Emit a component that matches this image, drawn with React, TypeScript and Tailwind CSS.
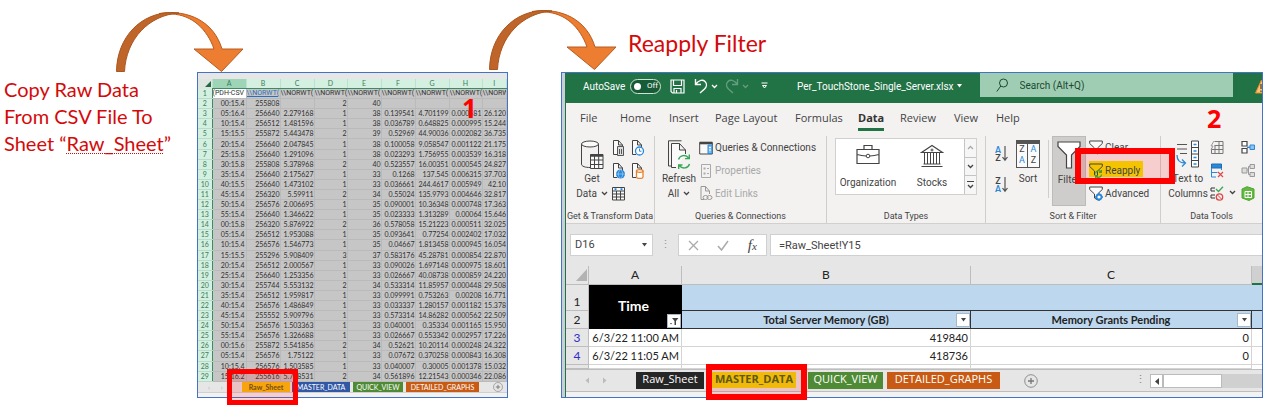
import React from "react";

const RAW_COLUMNS = ["A", "B", "C", "D", "E", "F", "G", "H", "I"];
const RAW_ROWS = [
  "00:15.4|255808||2|40||||",
  "05:16.4|256640|2.279168|1|38|0.139541|4.701199|0.000581|26.120",
  "10:15.4|256512|1.481596|1|38|0.036789|0.648825|0.000995|15.244",
  "15:15.5|255872|5.443478|2|39|0.52969|44.90036|0.002082|36.735",
  "20:15.4|256640|2.047845|1|38|0.100058|9.058547|0.001122|21.175",
  "25:15.8|256640|1.291096|1|38|0.023293|1.756955|0.003539|16.318",
  "30:15.8|255808|5.378968|2|40|0.523557|16.00351|0.000545|24.827",
  "35:15.4|256640|2.175627|1|33|0.1268|137.545|0.006315|37.703",
  "40:15.5|256640|1.473102|1|33|0.036661|244.4617|0.005949|42.10",
  "45:15.4|256320|5.59911|2|34|0.55024|135.9793|0.004646|32.817",
  "50:15.4|256576|2.006695|1|35|0.090001|10.36348|0.000748|17.363",
  "55:15.4|256640|1.346622|1|35|0.023333|1.313289|0.00064|15.646",
  "00:15.8|256320|5.876922|2|36|0.578058|15.21223|0.000511|32.025",
  "05:15.4|256512|1.953088|1|35|0.093641|0.77254|0.002402|17.032",
  "10:15.4|256576|1.546773|1|35|0.04667|1.813458|0.000945|16.054",
  "15:15.5|255296|5.908409|3|37|0.583176|45.28781|0.000854|22.870",
  "20:15.4|256512|2.000567|1|33|0.090026|1.697148|0.000975|18.601",
  "25:15.4|256640|1.253356|1|33|0.026667|40.08738|0.000859|24.220",
  "30:15.4|255744|5.553132|2|34|0.533314|11.85957|0.000448|29.508",
  "35:15.4|256512|1.959817|1|33|0.099991|0.753263|0.00208|16.771",
  "40:15.4|256576|1.486849|1|33|0.033337|1.280157|0.001182|15.378",
  "45:15.4|255552|5.909796|1|33|0.573314|14.86282|0.000562|22.509",
  "50:15.4|256576|1.503363|1|33|0.040001|0.35334|0.001165|15.950",
  "55:15.4|256576|1.326688|1|33|0.026667|0.553342|0.002957|17.226",
  "00:15.6|255872|5.541856|2|34|0.52621|10.20114|0.000248|24.322",
  "05:15.4|256576|1.75122|1|33|0.07672|0.370258|0.000843|16.308",
  "10:15.4|256576|1.503585|1|33|0.040007|0.30005|0.001378|15.032",
  "15:16.2|255616|5.748531|2|34|0.561896|12.21543|0.000346|22.086",
].map((r) => r.split("|"));

const Arrow = ({ className }: { className: string }) => (
  <svg className={className} width="130" height="62" viewBox="0 0 130 62" aria-hidden="true">
    <path d="M44 2.5C74-2 99 11 107 38H128L106.500 60.500 79 38H99C92 18 77 4 57 3Z" fill="#ED7D31" stroke="#B85C20" strokeWidth="1" />
    <path d="M1.500 60.500C2 26 26 1.500 57 1.500L64 2C34 4 11 28 9.500 60.500Z" fill="#C0652A" stroke="#A9561F" strokeWidth="1" />
  </svg>
);

const Chevron = ({ className = "" }: { className?: string }) => (
  <svg className={`shrink-0 ${className}`} width="7" height="5" viewBox="0 0 7 5" fill="none" stroke="currentColor" strokeWidth="1.300" aria-hidden="true">
    <path d="M1 1l2.500 2.500L6 1" />
  </svg>
);

const Caret = ({ className = "" }: { className?: string }) => (
  <svg className={`shrink-0 ${className}`} width="7" height="4" viewBox="0 0 7 4" fill="currentColor" aria-hidden="true">
    <path d="M1 0h5L3.500 3.500z" />
  </svg>
);

const PlusCircle = ({ className }: { className: string }) => (
  <svg className={className} viewBox="0 0 14 14" fill="none" stroke="#777" aria-hidden="true">
    <circle cx="7" cy="7" r="6.300" strokeWidth=".8" />
    <path d="M7 4v6M4 7h6" strokeWidth="1.300" />
  </svg>
);

const Svg = ({ w, h, children }: { w: number; h: number; children: React.ReactNode }) => (
  <svg width={w} height={h} viewBox={`0 0 ${w} ${h}`} fill="none" stroke="#444" strokeWidth="1" className="shrink-0" aria-hidden="true">
    {children}
  </svg>
);

const Page = () => <path d="M5 14.500H1.500V.5H6.500L10.500 5V8M6.500 .5V5H10.500" fill="#fafafa" />;

const FileTextIcon = () => (
  <Svg w={14} h={16}><Page /><path d="M5.500 6.500h6v9h-6zM7.500 9v5M9.500 9v5" fill="#ddd" stroke="#555" /></Svg>
);
const FileClockIcon = () => (
  <Svg w={14} h={16}><Page /><circle cx="8.500" cy="11" r="4" fill="#fff" stroke="#2B88D8" strokeWidth="1.300" /><path d="M8.500 8.500V11.200H10.500" stroke="#2B88D8" /></Svg>
);
const FileGlobeIcon = () => (
  <Svg w={14} h={16}><Page /><circle cx="8.500" cy="11" r="4.500" fill="#2B88D8" stroke="none" /><path d="M4 11h9M8.500 6.500c-3 3-3 6 0 9M8.500 6.500c3 3 3 6 0 9" stroke="#9cd0f5" strokeWidth=".7" /></Svg>
);
const FileDbIcon = () => (
  <Svg w={14} h={16}><Page /><path d="M5.500 8v6c0 2 6.500 2 6.500 0V8" fill="#fff" stroke="#E8802C" strokeWidth="1.300" /><ellipse cx="8.750" cy="8" rx="3.300" ry="1.300" fill="#fff" stroke="#E8802C" strokeWidth="1.300" /></Svg>
);
const TableIcon = () => (
  <Svg w={14} h={16}><path d="M.5 1.500h12v12.500H.5zM.5 5h12M.5 8h12M.5 11h12M4.500 5v9M8.500 5v9" fill="#fafafa" /><path d="M2.500 3.200h2M8.500 3.200h2" stroke="#2B88D8" strokeWidth="2" /></Svg>
);
const GetDataIcon = () => (
  <Svg w={24} h={30}>
    <path d="M1.500 4v20c0 2.500 4 3.500 8.500 3.500M18.500 4v10" />
    <ellipse cx="10" cy="4" rx="8.500" ry="3" fill="#fafafa" />
    <path d="M10.500 14.500h12.500v14H10.500z" fill="#fafafa" />
    <path d="M10.500 15.500h12.500" strokeWidth="2.500" />
    <path d="M10.500 20h12.500M10.500 24.500h12.500M14.500 15v13M18.700 15v13" />
  </Svg>
);
const RefreshIcon = () => (
  <Svg w={24} h={30}>
    <path d="M14.500 .8H1.500V26H5" />
    <path d="M9 27.500H4.500V3.500H12.500L18.500 10V14M12.500 3.500V10H18.500" fill="#fafafa" />
    <path d="M11.500 19.500A5.600 5.600 0 0 1 21.500 18M22.500 24A5.600 5.600 0 0 1 12.500 25.500M22.300 14.500V18.600H18M11.700 29V25H15.500" stroke="#3AA757" strokeWidth="1.400" />
  </Svg>
);
const QueriesIcon = () => (
  <Svg w={14} h={14}><path d="M.7 1.500h12.600v11.500H.7z" fill="#fafafa" /><path d="M.7 2h12.600" strokeWidth="2.600" /><path d="M9 4h4v8.500H9z" fill="#7DBDEC" stroke="#2B88D8" /><path d="M10 6.500h2M10 9h2" stroke="#fff" /></Svg>
);
const PropertiesIcon = () => (
  <Svg w={14} h={14}><g stroke="#aaa"><path d="M2.500 .5h9v13h-9z" /><path d="M4.500 4.500h2M4.500 9.500h2" strokeWidth="2" /><path d="M8 4.500h2M8 9.500h2" /></g></Svg>
);
const LinksIcon = () => (
  <Svg w={14} h={15}><g stroke="#999"><path d="M5 13.500H2V.5H6.500L10.500 5V8M6.500 .5V5H10.500" /><ellipse cx="6.500" cy="11.500" rx="2.500" ry="2" /><ellipse cx="10.500" cy="11.500" rx="2.500" ry="2" /></g></Svg>
);
const BriefcaseIcon = () => (
  <Svg w={24} h={21}><path d="M1 5.500h22V19.500H1zM8 5.500V1.500h8v4M1 10.500c4 1 6 1.300 9 1.500M23 10.500c-4 1-6 1.300-9 1.500" strokeWidth="1.200" /><circle cx="12" cy="12" r="1.800" /></Svg>
);
const BankIcon = () => (
  <Svg w={24} h={24}><path d="M1.500 8.500L12 1.500 22.500 8.500zM3.500 20h17M1.500 22.500h21" strokeWidth="1.200" /><circle cx="12" cy="6" r="1" /><path d="M4.500 9v11M7.500 9v11M10.500 9v11M13.500 9v11M16.500 9v11M19.500 9v11" /></Svg>
);
const SortIcon = ({ top, bottom, topColor, bottomColor }: { top: string; bottom: string; topColor: string; bottomColor: string }) => (
  <span className="flex items-center">
    <span className="flex flex-col text-[9px] font-semibold leading-2">
      <span className={topColor}>{top}</span>
      <span className={bottomColor}>{bottom}</span>
    </span>
    <Svg w={8} h={17}><path d="M4 1v14M1.500 12L4 15.200 6.500 12" stroke="#555" strokeWidth="1.200" /></Svg>
  </span>
);
const Funnel = ({ extra }: { extra?: React.ReactNode }) => (
  <Svg w={14} h={15}><path d="M.7 1h12.600v2.500L8.500 8v6L5.500 12V8L.7 3.500z" fill="#fafafa" />{extra}</Svg>
);

const FILE_TABS = [
  ["File", "w-10"],
  ["Home", "w-[49px]"],
  ["Insert", "w-[46px]"],
  ["Page Layout", "w-[80px]"],
  ["Formulas", "w-[63px]"],
  ["Data", "w-[42px]"],
  ["Review", "w-[54px]"],
  ["View", "w-[42px]"],
  ["Help", "w-[36px]"],
];

const Group = ({ label, className, children }: { label: string; className: string; children: React.ReactNode }) => (
  <section aria-label={label} className={`flex shrink-0 flex-col ${className}`}>
    <div className="flex h-[70px] shrink-0">{children}</div>
    <h3 className="mt-1 whitespace-nowrap text-center text-[9px] leading-[13px] text-[#444]">{label}</h3>
  </section>
);

const BigButton = ({ icon, lines, chevron, className }: { icon: React.ReactNode; lines: string[]; chevron?: boolean; className: string }) => (
  <button className={`flex h-[70px] shrink-0 flex-col items-center whitespace-nowrap pt-1 text-[10px] leading-[15px] text-[#444] ${className}`}>
    <span className="flex h-[31px] items-start">{icon}</span>
    {lines.map((l, i) => (
      <span key={l} className="flex items-center gap-1">
        {l}
        {chevron && i === lines.length - 1 && <Chevron />}
      </span>
    ))}
  </button>
);

const RowButton = ({ icon, label, disabled }: { icon: React.ReactNode; label: string; disabled?: boolean }) => (
  <button disabled={disabled} className={`flex h-[23px] items-center gap-0.5 whitespace-nowrap text-[10px] ${disabled ? "text-[#a8a8a8]" : "text-[#444]"}`}>
    {icon}
    {label}
  </button>
);

const IconButton = ({ label, children }: { label: string; children: React.ReactNode }) => (
  <button aria-label={label} className="flex h-[23px] items-center">{children}</button>
);

function RawWorkbook() {
  return (
    <section aria-label="Raw sheet" className="relative mt-[72px] flex w-[311px] shrink-0 flex-col self-start border border-[#4472c4] bg-[#e6e6e6] font-[Lato,sans-serif]">
      <div className="h-1.5" />
      <table className="h-[303px] w-full table-fixed border-collapse text-[7px] leading-[9px] text-[#303030]">
        <colgroup>
          <col className="w-[14px]" />
          {["w-[34px]", "w-[34px]", "w-[34px]", "w-[33px]", "w-[34px]", "w-[34px]", "w-[34px]", "w-[33px]"].map((w, i) => (
            <col key={i} className={w} />
          ))}
          <col />
        </colgroup>
        <thead>
          <tr className="bg-[#d3f0e0] text-[#3d7d5c]">
            <th className="bg-[#dfe6e2] p-0">
              <svg width="8" height="8" viewBox="0 0 8 8" className="ml-auto block" aria-hidden="true"><path d="M7 1v6H1z" fill="#1e6b43" /></svg>
            </th>
            {RAW_COLUMNS.map((c) => (
              <th key={c} className={`border-x border-b border-x-[#bfe0cf] border-b-[#3d8b63] p-0 font-normal ${c === "A" ? "bg-[#9fd5b7]" : ""}`}>{c}</th>
            ))}
          </tr>
        </thead>
        <tbody className="bg-[#c6c6c6]">
          <tr>
            <th className="border-b border-r border-b-[#b9dcca] border-r-[#3d8b63] bg-[#d3f0e0] p-0 font-normal text-[#3d7d5c]">1</th>
            {RAW_COLUMNS.map((c) => (
              <td key={c} className={`overflow-hidden whitespace-nowrap border border-[#bababa] p-0 font-[Roboto,sans-serif] ${c === "A" ? "bg-white" : ""} ${c === "B" ? "text-[#2f6db5] underline" : ""}`}>
                {c === "A" ? "(PDH-CSV" : c === "I" ? "\\\\NORW" : "\\\\NORWT("}
              </td>
            ))}
          </tr>
          {RAW_ROWS.map((row, i) => (
            <tr key={i}>
              <th className="border-b border-r border-b-[#b9dcca] border-r-[#3d8b63] bg-[#d3f0e0] p-0 font-normal text-[#3d7d5c]">{i + 2}</th>
              {row.map((v, j) => (
                <td key={j} className={`overflow-hidden border border-[#bababa] p-0 text-right ${j === 0 ? "pr-px" : ""}`}>{v}</td>
              ))}
            </tr>
          ))}
        </tbody>
      </table>
      <div className="flex h-[10px] pl-[10px] text-[7px] leading-[10px] text-white">
        <span className="w-[34px] text-[#b0b0b0]">‹&nbsp;&nbsp;&nbsp;&nbsp;&nbsp;&nbsp;›</span>
        <button className="relative w-12 bg-[#f5c211] font-bold text-[#5c5a10]">
          Raw_Sheet
          <span className="absolute -left-[15px] -top-[13px] h-9 w-[71px] border-[5px] border-[#fe0000] bg-[#ff0000]/15" />
        </button>
        <button className="ml-0.5 w-[58px] bg-[#3158a6]">MASTER_DATA</button>
        <button className="ml-[3px] w-[50px] bg-[#4f8a35]">QUICK_VIEW</button>
        <button className="ml-[3px] w-[73px] bg-[#c85a14]">DETAILED_GRAPHS</button>
        <button aria-label="Add sheet" className="ml-[14px]"><PlusCircle className="size-[10px]" /></button>
      </div>
      <div className="h-[5px] border-t border-[#d0d0d0] bg-[#f2f2f2]" />
      <span className="absolute left-[264px] top-[18px] font-['Open_Sans',sans-serif] text-[26px] font-bold leading-[34px] text-[#fe0000]">1</span>
    </section>
  );
}

function TitleBar() {
  return (
    <header className="flex h-[30px] items-center bg-[#217346] pb-1 pl-[17px] text-[10px] text-white">
      <span className="w-[47px]">AutoSave</span>
      <button role="switch" aria-checked="false" aria-label="AutoSave" className="flex h-[15px] w-[31px] items-center gap-1.5 rounded-full border border-[#cfe3d7] bg-[#185c37] px-0.5 text-[8px]">
        <span className="ml-px size-[7px] rounded-full bg-white" />
        Off
      </button>
      <button aria-label="Save" className="ml-[9px]">
        <svg width="15" height="15" viewBox="0 0 15 15" fill="none" stroke="#fff" strokeWidth="1.200" aria-hidden="true"><path d="M1 1h13v13H2.500L1 12.500zM3.500 1v5.500h8V1M4 14v-4.500h7V14M6.500 11v3" /></svg>
      </button>
      <button aria-label="Undo" className="ml-[9px]">
        <svg width="14" height="16" viewBox="0 0 14 16" fill="none" stroke="#fff" strokeWidth="1.400" aria-hidden="true"><path d="M1.500 1v5.500H7M1.500 6.500C5 1.500 9 1.500 11 3.500C13.500 6 12.500 9 10.500 11L6 15" /></svg>
      </button>
      <Chevron className="ml-[3px]" />
      <button aria-label="Redo" className="ml-[7px] opacity-30">
        <svg width="14" height="16" viewBox="0 0 14 16" fill="none" stroke="#fff" strokeWidth="1.400" aria-hidden="true"><path d="M12.500 1v5.500H7M12.500 6.500C9 1.500 5 1.500 3 3.500C.5 6 1.500 9 3.500 11L8 15" /></svg>
      </button>
      <Chevron className="ml-[3px] opacity-30" />
      <button aria-label="Customize" className="ml-[12px]">
        <svg width="7" height="8" viewBox="0 0 7 8" fill="none" stroke="#fff" aria-hidden="true"><path d="M.5 1h6M1.500 3.500h4L3.500 6z" /></svg>
      </button>
      <h2 className="ml-[29px] shrink-0 whitespace-nowrap">Per_TouchStone_Single_Server.xlsx</h2>
      <Caret className="ml-0.5" />
      <label className="ml-[17px] mr-[22px] flex h-6 flex-1 items-center self-start bg-[#9fcdb3] pl-4 text-[#1c4a30]">
        <svg width="13" height="15" viewBox="0 0 13 15" fill="none" stroke="currentColor" aria-hidden="true"><circle cx="7.500" cy="5" r="4" /><path d="M4.800 8L.8 13.500" /></svg>
        <input aria-label="Search" placeholder="Search (Alt+Q)" className="ml-[11px] w-40 bg-transparent outline-none placeholder:text-[#1c4a30]" />
      </label>
      <svg width="7" height="15" viewBox="0 0 7 15" className="shrink-0" aria-hidden="true"><path d="M6.500 1L12 14H.5z" fill="#fbc27a" stroke="#e88b24" /><path d="M6 5v5M6 11.500V13" stroke="#222" /></svg>
    </header>
  );
}

function Ribbon() {
  return (
    <div className="bg-[#f3f2f1] text-[#444]">
      <nav className="flex h-[33px] items-start pl-[14px] font-['Open_Sans',sans-serif] text-[11px]">
        {FILE_TABS.map(([name, w]) => (
          <button key={name} className={`flex shrink-0 whitespace-nowrap ${w}`}>
            <span className={`pt-1.5 leading-[17px] ${name === "Data" ? "border-b-[3px] border-[#217346] pb-0.5 font-bold text-[#333]" : ""}`}>{name}</span>
          </button>
        ))}
      </nav>
      <div className="flex h-[88px] divide-x divide-[#cfcecd] border-b border-[#d2d0ce]">
        <Group label="Get & Transform Data" className="w-[89px]">
          <BigButton icon={<GetDataIcon />} lines={["Get", "Data"]} chevron className="ml-2 w-9" />
          <div className="grid grid-cols-[19px_19px] content-start pl-[2px]">
            <IconButton label="From text"><FileTextIcon /></IconButton>
            <IconButton label="Recent sources"><FileClockIcon /></IconButton>
            <IconButton label="From web"><FileGlobeIcon /></IconButton>
            <IconButton label="Existing connections"><FileDbIcon /></IconButton>
            <IconButton label="From table"><TableIcon /></IconButton>
          </div>
        </Group>
        <Group label="Queries & Connections" className="w-[172px]">
          <BigButton icon={<RefreshIcon />} lines={["Refresh", "All"]} chevron className="ml-1 w-10" />
          <div className="flex flex-col">
            <RowButton icon={<QueriesIcon />} label="Queries & Connections" />
            <RowButton icon={<PropertiesIcon />} label="Properties" disabled />
            <RowButton icon={<LinksIcon />} label="Edit Links" disabled />
          </div>
        </Group>
        <Group label="Data Types" className="w-[159px]">
          <div className="ml-2 mt-0.5 flex h-[57px] w-[142px] border border-[#d2d0ce] bg-white text-[10px] leading-[14px]">
            <button className="flex w-16 flex-col items-center justify-end pb-1"><span className="flex h-8 items-start"><BriefcaseIcon /></span>Organization</button>
            <button className="flex w-16 flex-col items-center justify-end pb-1"><span className="flex h-8 items-start"><BankIcon /></span>Stocks</button>
            <div className="ml-auto flex w-3 flex-col divide-y divide-[#c4c4c4] border-l border-[#c4c4c4] bg-[#f6f6f6]">
              <button aria-label="Previous" className="flex flex-1 items-center justify-center text-[#aaa]"><Chevron className="rotate-180" /></button>
              <button aria-label="Next" className="flex flex-1 items-center justify-center"><Chevron /></button>
              <button aria-label="More" className="flex flex-1 flex-col items-center justify-center gap-0.5"><span className="h-px w-[7px] bg-[#444]" /><Chevron /></button>
            </div>
          </div>
        </Group>
        <Group label="Sort & Filter" className="w-[175px]">
          <div className="ml-[9px] flex w-[17px] flex-col gap-[14px] pt-[9px]">
            <button aria-label="Sort A to Z"><SortIcon top="A" bottom="Z" topColor="text-[#2b88d8]" bottomColor="text-[#444]" /></button>
            <button aria-label="Sort Z to A"><SortIcon top="Z" bottom="A" topColor="text-[#444]" bottomColor="text-[#2b88d8]" /></button>
          </div>
          <BigButton
            icon={
              <span className="grid h-7 w-6 grid-cols-2 border border-t-4 border-[#555] bg-[#fafafa] text-center text-[9px] leading-[11px]">
                <span className="border-r border-[#555]">Z<br /><span className="text-[#2b88d8]">A</span></span>
                <span><span className="text-[#2b88d8]">A</span><br />Z</span>
              </span>
            }
            lines={["Sort"]}
            className="ml-1 w-6"
          />
          <div className="ml-2 mt-1 h-[58px] w-px bg-[#cfcecd]" />
          <BigButton
            icon={<Svg w={24} h={28}><path d="M1 1h22v4.500L14.500 14v13H9.500V14L1 5.500z" fill="#fff" strokeWidth="1.200" /></Svg>}
            lines={["Filter"]}
            className="ml-[3px] w-[34px] border border-[#bdbbb9] bg-[#cfcdcb]"
          />
          <div className="flex flex-col pl-[3px]">
            <RowButton icon={<Funnel extra={<path d="M9 9l4 4M13 9l-4 4" stroke="#d33" />} />} label="Clear" />
            <div className="relative flex h-[23px]">
              <span className="absolute -left-[14px] -top-[11px] h-9 w-[100px] bg-[#ff0000]/15" />
              <span className="absolute left-0 top-0.5 h-4 w-[54px] bg-[#f5c400]" />
              <span className="relative flex">
                <RowButton
                  icon={<Svg w={14} h={15}><path d="M.7 1h12.600v2.500L8.500 8v5L5.500 12V8L.7 3.500z" /><path d="M6.500 10.500a3 3 0 0 1 5.500-1.500M12.500 11.500a3 3 0 0 1-5.500 1.500M12.300 7v2.300H10M6.700 15v-2.300H9" stroke="#4a9a2a" strokeWidth="1.300" /></Svg>}
                  label="Reapply"
                />
              </span>
              <span className="absolute -left-[14px] -top-[11px] h-9 w-[100px] border-[6px] border-[#fe0000]" />
            </div>
            <RowButton icon={<Funnel extra={<><circle cx="10" cy="11" r="2.500" fill="#fff" stroke="#2B88D8" strokeWidth="1.800" /><path d="M10 7v1.500M10 13.500V15M6 11h1.500M12.500 11H14" stroke="#2B88D8" strokeWidth="1.500" /></>} />} label="Advanced" />
          </div>
        </Group>
        <section aria-label="Data Tools" className="relative min-w-0 flex-1">
          <div className="flex h-[70px]">
            <BigButton
              icon={
                <Svg w={24} h={28}>
                  <path d="M1 4.500h10M1 9h10M4 13.500h7" stroke="#555" />
                  <path d="M15.500 1h7v26h-7zM15.500 7.500h7M15.500 14h7M15.500 20.500h7" fill="#fff" />
                  <path d="M17.500 4.500h3M17.500 11h3M17.500 17.500h3M17.500 24h3M1 15c0 6 3 8 8 8M6 19.500L9.500 23 6 26.500" stroke="#2B88D8" strokeWidth="1.300" />
                </Svg>
              }
              lines={["Text to", "Columns"]}
              className="ml-[7px] w-10"
            />
            <div className="ml-0.5 flex w-[19px] flex-col">
              <IconButton label="Flash fill"><Svg w={14} h={15}><path d="M4.500 1.500H13v12H1.500V8M9 1.500v12M4.500 5.500H13M2 9.500h11M5 5.500v8" stroke="#777" /><path d="M4 1L1 6h2L1 10" stroke="#999" /></Svg></IconButton>
              <IconButton label="Remove duplicates"><Svg w={14} h={15}><path d="M1.500 1h10v4h-10z" fill="#2B88D8" stroke="#1f6cb0" /><path d="M1.500 5v9H6M1.500 9.500h6M11.500 5v2" stroke="#2B88D8" /><path d="M8 9l5 5M13 9l-5 5" stroke="#e04848" strokeWidth="1.200" /></Svg></IconButton>
              <IconButton label="Data validation"><Svg w={14} h={15}><path d="M5 2H1v3h4M5 9H1v3h4" stroke="#333" /><path d="M6 3l2.500 2.500L13 .8" stroke="#3AA757" strokeWidth="1.300" /><circle cx="9.500" cy="11" r="3.200" stroke="#e04848" strokeWidth="1.300" /><path d="M7.500 9l4 4" stroke="#e04848" /></Svg></IconButton>
            </div>
            <div className="flex w-3 items-end pb-[11px]"><Chevron /></div>
            <div className="flex flex-col">
              <IconButton label="Consolidate"><Svg w={14} h={15}><path d="M1 1.500h5v4.500H1zM1 8.500h5v4.500H1z" fill="#fff" strokeWidth="1.200" /><path d="M6 7.300h3" stroke="#2B88D8" strokeWidth="1.400" /><path d="M9 5h4.500v4.500H9z" fill="#8cc4ee" stroke="#2B88D8" /></Svg></IconButton>
              <IconButton label="Relationships"><Svg w={14} h={15}><g stroke="#999"><path d="M6 7h1.500V3.500H9M7.500 7v4.500H9" /><path d="M1 5h5v5H1zM9 1.500h4.500v4H9zM9 9.500h4.500v4H9z" fill="#ddd" /></g></Svg></IconButton>
              <IconButton label="Data model"><Svg w={14} h={15}><path d="M1 3l5-2.300L13 3v9l-5 2.500L1 12z" fill="#63B842" stroke="#4ea52f" /><path d="M4 5.500h6.500v6H4zM4 8.500h6.500M7 5.500v6" stroke="#fff" /></Svg></IconButton>
            </div>
          </div>
          <h3 className="mt-1 text-center text-[9px] leading-[13px]">Data Tools</h3>
          <span className="absolute left-[46px] -top-9 font-['Open_Sans',sans-serif] text-[25px] font-bold leading-9 text-[#fe0000]">2</span>
        </section>
      </div>
    </div>
  );
}

function FormulaBar() {
  return (
    <div className="flex h-[42px] items-center bg-[#e6e6e6] pb-1.5 pl-1 pt-1.5 text-[11px] text-[#444]">
      <label className="flex h-[22px] w-[83px] items-center border border-[#d0d0d0] bg-white pl-1">
        <input aria-label="Name box" defaultValue="D16" className="w-[66px] outline-none" />
        <Caret />
      </label>
      <span className="w-[25px] text-center text-[#999]">⋮</span>
      <div className="flex h-[22px] w-[89px] items-center justify-around border border-[#d0d0d0] bg-white">
        <button aria-label="Cancel"><Svg w={11} h={11}><path d="M1 1l9 9M10 1l-9 9" stroke="#aaa" strokeWidth="1.300" /></Svg></button>
        <button aria-label="Enter"><Svg w={12} h={11}><path d="M1 6l3.500 4L11 1" stroke="#aaa" strokeWidth="1.500" /></Svg></button>
        <button aria-label="Insert function" className="font-['Liberation_Serif',serif] text-[15px] italic leading-4">f<span className="text-[11px]">x</span></button>
      </div>
      <input aria-label="Formula" defaultValue="=Raw_Sheet!Y15" className="ml-[3px] h-[22px] min-w-0 flex-1 border border-r-0 border-[#d0d0d0] bg-white pl-2 outline-none" />
    </div>
  );
}

const FilterButton = ({ active }: { active?: boolean }) => (
  <button aria-label="Filter column" className="flex size-[14px] items-center justify-center border border-[#a9b7c6] bg-white text-[#444]">
    {active ? (
      <svg width="10" height="9" viewBox="0 0 10 9" fill="currentColor" aria-hidden="true"><path d="M3 1h6.500L7 4v4H5.500V4zM1 6h2L2 7.500z" /></svg>
    ) : (
      <Caret />
    )}
  </button>
);

function MasterSheet() {
  const rowHead = "border-b border-r border-[#bdbdbd] bg-[#e6e6e6] p-0 text-center text-[12px] font-normal";
  const cell = "whitespace-nowrap border-b border-r border-[#d4d4d4] p-0 pr-0.5 text-right";
  const heading = "border-b border-r border-[#333] bg-[#bdd7ee] p-0";
  return (
    <table className="w-full table-fixed border-separate border-spacing-0 bg-white font-[Lato,sans-serif] text-[11px] leading-[14px] text-[#222]">
      <colgroup>
        <col className="w-[23px]" />
        <col className="w-[93px]" />
        <col className="w-[289px]" />
        <col />
        <col className="w-[10px]" />
      </colgroup>
      <thead>
        <tr className="h-[19px] bg-[#e6e6e6]">
          <th className="border-b border-r border-[#bdbdbd] p-0"><svg width="11" height="12" viewBox="0 0 11 12" className="ml-auto mr-px" aria-hidden="true"><path d="M11 0v12H0z" fill="#b3b3b3" /></svg></th>
          {["A", "B", "C"].map((c) => (
            <th key={c} className="border-b border-r border-[#bdbdbd] p-0 text-[12px] font-normal">{c}</th>
          ))}
          <th className="border-b-2 border-[#217346] bg-[#d0d0d0] p-0" />
        </tr>
      </thead>
      <tbody>
        <tr className="h-[26px]">
          <th className={`${rowHead} pt-2`}>1</th>
          <th rowSpan={2} className="bg-black p-0 text-[14px] text-white">
            <span className="relative block h-11 pr-1 pt-[14px]">
              <span>Time</span>
              <span className="absolute bottom-px right-px"><FilterButton active /></span>
            </span>
          </th>
          <td colSpan={3} className="border-b border-[#333] bg-[#bdd7ee] p-0" />
        </tr>
        <tr className="h-[18px]">
          <th className={rowHead}>2</th>
          {["Total Server Memory (GB)", "Memory Grants Pending"].map((t) => (
            <th key={t} className={heading}>
              <span className="flex items-center">
                <span className="flex-1 pl-[14px]">{t}</span>
                <FilterButton />
              </span>
            </th>
          ))}
          <td className="border-b border-[#333] bg-[#bdd7ee] p-0" />
        </tr>
        {[["3", "6/3/22 11:00 AM", "419840"], ["4", "6/3/22 11:05 AM", "418736"]].map(([n, time, mem]) => (
          <tr key={n} className="h-[18px]">
            <th className={`${rowHead} text-[#2f2fc8]`}>{n}</th>
            <td className={cell}>{time}</td>
            <td className={cell}>{mem}</td>
            <td className={cell}>0</td>
            <td className="border-b border-[#d4d4d4] p-0" />
          </tr>
        ))}
        <tr className="h-1">
          <th className={rowHead} />
          <td className={cell} />
          <td className={cell} />
          <td className={cell} />
          <td className="p-0" />
        </tr>
      </tbody>
    </table>
  );
}

function SheetTabs() {
  return (
    <>
      <div className="flex h-[23px] items-start border-y border-[#bdbdbd] bg-[#e6e6e6] pt-0.5 font-['Open_Sans',sans-serif] text-[11px] leading-[13px] text-white">
        <svg width="70" height="17" viewBox="0 0 70 17" fill="#bbb" className="shrink-0" aria-hidden="true"><path d="M23 5.500v6l-3.500-3zM37 5.500v6l3.500-3z" /></svg>
        <button className="h-[17px] w-[68px] bg-[#262626] pb-1">Raw_Sheet</button>
        <button className="relative ml-2 h-[17px] w-[92px] pb-1 font-bold text-[#5c5a10]">
          <span className="absolute -left-1.5 -top-2 h-9 w-[101px] bg-[#ff0000]/15" />
          <span className="absolute left-0 top-0 h-4 w-[84px] bg-[#f0b90b]" />
          <span className="absolute -left-1.5 -top-2 h-9 w-[101px] border-[6px] border-[#fe0000]" />
          <span className="relative block pr-2">MASTER_DATA</span>
        </button>
        <button className="ml-1 h-[17px] w-[75px] bg-[#4f8a35] pb-1">QUICK_VIEW</button>
        <button className="ml-1 h-[17px] w-[113px] bg-[#c85a14] pb-1">DETAILED_GRAPHS</button>
        <button aria-label="Add sheet" className="ml-6 mt-0.5"><PlusCircle className="size-[14px]" /></button>
        <span className="ml-auto w-[15px] shrink-0 text-[#888]">⋮</span>
        <div className="mt-0.5 flex h-[14px] w-[112px] shrink-0 bg-[#d0d0d0]">
          <button aria-label="Scroll left" className="flex w-[13px] items-center justify-center border border-[#bbb] bg-white text-[#444]"><svg width="4" height="7" viewBox="0 0 4 7" fill="currentColor" aria-hidden="true"><path d="M4 0v7L0 3.500z" /></svg></button>
          <span className="w-[59px] border border-[#bbb] bg-white" />
        </div>
      </div>
      <div className="h-[5px] bg-[#f2f2f2]" />
    </>
  );
}

export default function App() {
  return (
    <main className="relative flex w-full overflow-hidden bg-white pb-[9px] font-[Roboto,sans-serif]">
      <h1 className="w-[197px] shrink-0 whitespace-nowrap pl-1 pt-[76px] font-[Lato,sans-serif] text-[20px] leading-[27px] text-[#d40a0a]">
        Copy Raw Data
        <br />
        From CSV File To
        <br />
        Sheet “<span className="underline decoration-[#d40a0a] decoration-dotted decoration-1 underline-offset-2">Raw_Sheet</span>”
      </h1>
      <RawWorkbook />
      <div className="ml-[53px] mr-1 flex min-w-0 flex-1 flex-col">
        <h1 className="h-[72px] pl-[67px] pt-[28px] font-[Lato,sans-serif] text-[23px] leading-[30px] text-[#d40a0a]">Reapply Filter</h1>
        <section aria-label="Master workbook" className="flex border border-[#4472c4] bg-[#c9cfd6]">
          <div className="ml-[3px] min-w-0 flex-1 border-l border-[#217346]">
            <TitleBar />
            <Ribbon />
            <FormulaBar />
            <MasterSheet />
            <SheetTabs />
          </div>
        </section>
      </div>
      <Arrow className="absolute left-[115px] top-[11px]" />
      <Arrow className="absolute left-[488px] top-[9px]" />
    </main>
  );
}
